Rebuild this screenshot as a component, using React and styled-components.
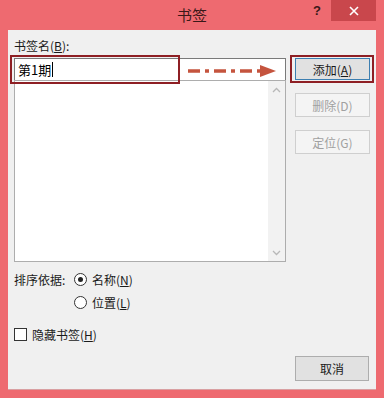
import React from "react";
import styled, { createGlobalStyle } from "styled-components";

const Global = createGlobalStyle`
  html, body { margin: 0; padding: 0; }
  body {
    width: 384px; height: 398px; overflow: hidden;
    background: #ee6a70;
    font-family: "Noto Sans CJK SC", "Microsoft YaHei", sans-serif;
    font-size: 12px; color: #1a1a1a;
  }
`;

const Frame = styled.div`
  width: 384px; height: 398px;
  display: flex; flex-direction: column;
  background: #ee6a70;
  position: relative;
`;

const TitleBar = styled.div`
  height: 30px; position: relative;
  display: flex; align-items: center; justify-content: center;
`;

const Title = styled.span`
  font-size: 15px; color: #3a1818; margin-top: -1px;
`;

const TitleButtons = styled.div`
  position: absolute; top: 0; right: 8px;
  display: flex; align-items: flex-start; height: 21px;
`;

const Help = styled.span`
  width: 28px; text-align: center; font-weight: bold; font-size: 13px;
  color: #3a1818; line-height: 22px; font-family: "Liberation Sans", sans-serif;
`;

const Close = styled.div`
  width: 45px; height: 21px; background: #c9474c;
  display: flex; align-items: center; justify-content: center;
`;

const Content = styled.div`
  margin: 0 8px;
  height: 360px;
  background: #f0f0f0;
  box-shadow: inset 0 -1px 0 #d9a0a2;
  padding: 8px 6px 0 6px;
  box-sizing: border-box;
  display: flex; flex-direction: column;
  position: relative;
`;

const Top = styled.div`
  display: flex; gap: 9px;
`;

const LeftCol = styled.div`
  width: 272px; display: flex; flex-direction: column;
`;

const Label = styled.div`
  height: 18px; line-height: 16px; margin-bottom: 2px; color: #1a1a1a;
  u { text-decoration: underline; }
`;

const Input = styled.div`
  height: 22px; background: #fff; border: 1px solid #7a7a7a;
  border-bottom: none;
  box-sizing: border-box; display: flex; align-items: center;
  padding-left: 3px; font-size: 13px; color: #000;
`;

const Caret = styled.span`
  display: inline-block; width: 1px; height: 15px; background: #000; margin-left: 1px;
`;

const List = styled.div`
  height: 182px; background: #fff; border: 1px solid #adadad;
  box-sizing: border-box; display: flex; justify-content: flex-end;
`;

const ScrollBar = styled.div`
  width: 17px; background: #f2f2f2;
  display: flex; flex-direction: column; justify-content: space-between; align-items: center;
  padding: 6px 0 5px;
`;

const RightCol = styled.div`
  width: 75px; display: flex; flex-direction: column; gap: 13px;
  padding-top: 20px;
`;

const Button = styled.div`
  height: ${p => p.$h || 23}px; box-sizing: border-box;
  border: 1px solid ${p => (p.$default ? "#3c7fb1" : p.$disabled ? "#cfcfcf" : "#adadad")};
  background: ${p => (p.$disabled ? "#f4f4f4" : "#e1e1e1")};
  color: ${p => (p.$disabled ? "#a0a0a0" : "#1a1a1a")};
  display: flex; align-items: center; justify-content: center;
  font-size: 12px;
  u { text-decoration: underline; }
`;

const SortRow = styled.div`
  display: grid; grid-template-columns: 60px auto; row-gap: 5px;
  margin-top: 8px; align-items: center;
`;

const Option = styled.div`
  display: flex; align-items: center; gap: 5px; height: 18px;
  grid-column: 2;
  u { text-decoration: underline; }
`;

const Radio = styled.span`
  width: 11px; height: 11px; border-radius: 50%;
  border: 1px solid #333; background: #fff; box-sizing: content-box;
  display: flex; align-items: center; justify-content: center;
  &::after {
    content: ""; width: 5px; height: 5px; border-radius: 50%;
    background: ${p => (p.$on ? "#222" : "transparent")};
  }
`;

const CheckRow = styled.div`
  display: flex; align-items: center; gap: 5px; margin-top: 14px; height: 18px;
  u { text-decoration: underline; }
`;

const Box = styled.span`
  width: 11px; height: 11px; border: 1px solid #333; background: #fff;
`;

const Bottom = styled.div`
  display: flex; justify-content: flex-end; margin-top: 13px; padding-right: 1px;
`;

const CancelBtn = styled(Button)`
  width: 74px;
`;

const Annot = styled.div`
  position: absolute;
  border: 2px solid #8e1f24;
  box-sizing: border-box;
  pointer-events: none;
`;

const Arrow = styled.svg`
  position: absolute; left: 186px; top: 64px;
`;

export default function App() {
  return (
    <Frame>
      <Global />
      <TitleBar>
        <Title>书签</Title>
        <TitleButtons>
          <Help>?</Help>
          <Close>
            <svg width="10" height="10" viewBox="0 0 10 10">
              <path d="M1 1L9 9M9 1L1 9" stroke="#fff" strokeWidth="1.6" />
            </svg>
          </Close>
        </TitleButtons>
      </TitleBar>
      <Content>
        <Top>
          <LeftCol>
            <Label>书签名(<u>B</u>):</Label>
            <Input>第1期<Caret /></Input>
            <List>
              <ScrollBar>
                <svg width="9" height="6" viewBox="0 0 9 6">
                  <path d="M1 5L4.5 1.5L8 5" stroke="#b8b8b8" strokeWidth="1.3" fill="none" />
                </svg>
                <svg width="9" height="6" viewBox="0 0 9 6">
                  <path d="M1 1L4.5 4.5L8 1" stroke="#b8b8b8" strokeWidth="1.3" fill="none" />
                </svg>
              </ScrollBar>
            </List>
          </LeftCol>
          <RightCol>
            <Button $default $h={22}><span>添加(<u>A</u>)</span></Button>
            <Button $disabled $h={24}>删除(D)</Button>
            <Button $disabled $h={24}>定位(G)</Button>
          </RightCol>
        </Top>
        <SortRow>
          <span>排序依据:</span>
          <Option><Radio $on /><span>名称(<u>N</u>)</span></Option>
          <Option><Radio /><span>位置(<u>L</u>)</span></Option>
        </SortRow>
        <CheckRow><Box /><span>隐藏书签(<u>H</u>)</span></CheckRow>
        <Bottom>
          <CancelBtn $h={25}>取消</CancelBtn>
        </Bottom>
      </Content>
      <Annot style={{ left: 10, top: 55, width: 170, height: 29 }} />
      <Annot style={{ left: 290, top: 55, width: 84, height: 28 }} />
      <Arrow width="92" height="14" viewBox="0 0 92 14">
        <path d="M2 7H76" stroke="#c5543e" strokeWidth="3.5" strokeDasharray="12 5 4 5" />
        <path d="M74 1L90 7L74 13Z" fill="#c5543e" />
      </Arrow>
    </Frame>
  );
}
